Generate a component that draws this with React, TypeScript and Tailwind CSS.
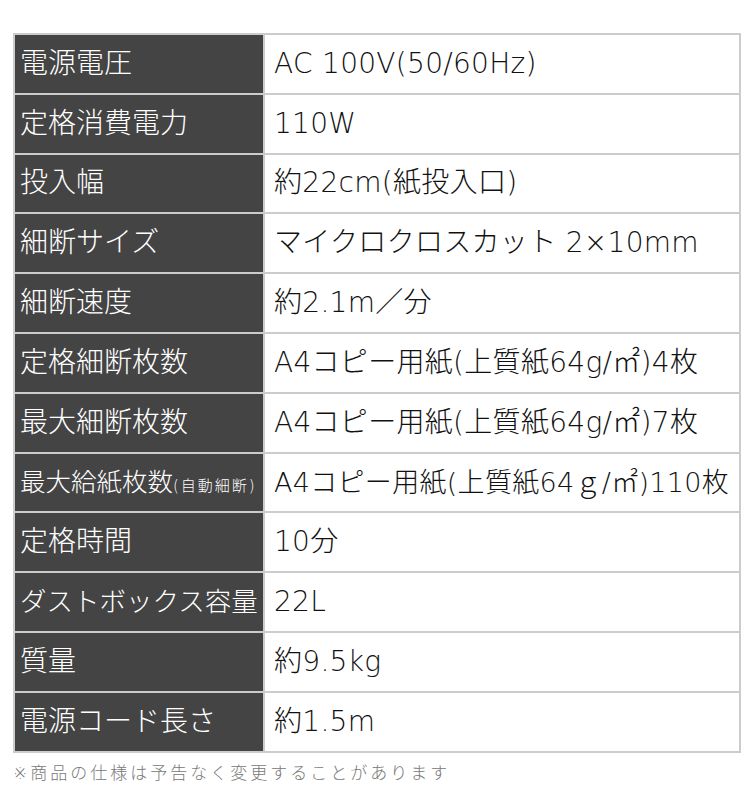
import React from "react";

type Row = { label: React.ReactNode; value: string; labelSize?: string; valueSize?: string };

const rows: Row[] = [
  { label: "電源電圧", value: "AC 100V(50/60Hz)" },
  { label: "定格消費電力", value: "110W" },
  { label: "投入幅", value: "約22cm(紙投入口)" },
  { label: "細断サイズ", value: "マイクロクロスカット 2×10mm" },
  { label: "細断速度", value: "約2.1m／分" },
  { label: "定格細断枚数", value: "A4コピー用紙(上質紙64g/㎡)4枚" },
  { label: "最大細断枚数", value: "A4コピー用紙(上質紙64g/㎡)7枚" },
  {
    label: (
      <>
        <span className="text-[25.5px]">最大給紙枚数</span>
        <span className="text-[15px] tracking-[2px]">(自動細断)</span>
      </>
    ),
    value: "A4コピー用紙(上質紙64ｇ/㎡)110枚",
    valueSize: "text-[27px]",
  },
  { label: "定格時間", value: "10分" },
  { label: "ダストボックス容量", value: "22L", labelSize: "text-[26.5px]" },
  { label: "質量", value: "約9.5kg" },
  { label: "電源コード長さ", value: "約1.5m" },
];

export default function App() {
  return (
    <div
      className="w-[750px] h-[810px] bg-white pt-[33px] px-[13px] font-extralight"
      style={{ fontFamily: '"DejaVu Sans", "Noto Sans CJK JP", sans-serif' }}
    >
      <table className="w-[728px] border-collapse table-fixed">
        <colgroup>
          <col className="w-[250px]" />
          <col />
        </colgroup>
        <tbody>
          {rows.map((r, i) => (
            <tr key={i} className="h-[59.8px]">
              <td
                className={`bg-[#444444] text-white ${r.labelSize ?? "text-[28px]"} leading-none pl-[5px] pr-0 border-2 border-[#cccccc] whitespace-nowrap overflow-hidden`}
              >
                {r.label}
              </td>
              <td
                className={`text-[#111111] ${r.valueSize ?? "text-[28px]"} leading-none pl-[9px] border-2 border-[#cccccc] whitespace-nowrap tracking-[0.3px]`}
              >
                {r.value}
              </td>
            </tr>
          ))}
        </tbody>
      </table>
      <p className="mt-[12px] text-[17px] tracking-[3px] text-[#777777] leading-none">
        ※商品の仕様は予告なく変更することがあります
      </p>
    </div>
  );
}
